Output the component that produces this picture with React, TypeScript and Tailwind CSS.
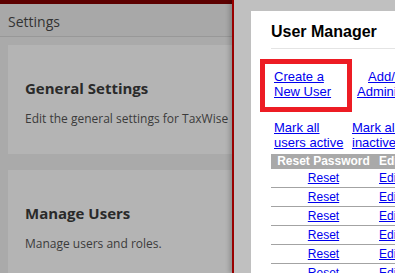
import React from "react";

const os = { fontFamily: '"Open Sans", "Noto Sans", sans-serif' };
const ar = { fontFamily: '"Liberation Sans", Arial, sans-serif' };

function Card({ title, desc, h }: { title: string; desc: string; h: string }) {
  return (
    <div className={`w-[240px] shrink-0 bg-[#b4b4b4] pl-[17px] pt-[33px] ${h}`}>
      <div className="text-[15px] leading-[20px] font-bold text-[#2a2a2a] whitespace-nowrap">{title}</div>
      <div className="mt-[12px] text-[12px] leading-[17px] text-[#3b3b3b] whitespace-nowrap">{desc}</div>
    </div>
  );
}

export default function App() {
  const rows = [0, 1, 2, 3, 4, 5];
  return (
    <div className="w-[395px] h-[273px] overflow-hidden flex bg-[#aaaaaa]">
      <div className="w-[232px] shrink-0 flex flex-col overflow-hidden" style={os}>
        <div className="h-[4px] bg-[#5c0000] shrink-0" />
        <div className="h-[33px] shrink-0 bg-[#a8a8a8] border-b border-[#989898] pl-[8px] pt-[8px] text-[14px] leading-[20px] text-[#333]">
          Settings
        </div>
        <div className="pl-[8px] pt-[8px] flex flex-col gap-[16px]">
          <Card title="General Settings" desc="Edit the general settings for TaxWise" h="h-[109px]" />
          <Card title="Manage Users" desc="Manage users and roles." h="h-[109px]" />
        </div>
      </div>
      <div className="flex-1 flex border-l-2 border-[#990000] bg-[#c0c0c0] pl-[17px] pt-[11px] shadow-[-3px_0_4px_rgba(0,0,0,0.18)] overflow-hidden" style={ar}>
        <div className="flex-1 bg-white pt-[12px] overflow-hidden">
          <div className="pl-[20px] text-[16px] leading-[18px] font-bold text-black whitespace-nowrap">User Manager</div>
          <div className="ml-[20px] mt-[7px] h-px bg-[#e4e4e4]" />
          <div className="mt-[10px] ml-[9px] flex items-start">
            <div className="w-[92px] h-[53px] shrink-0 border-[5px] border-[#ed1c24] pl-[9px] pt-[5px] text-[13px] leading-[15px]">
              <a className="text-[#0000ee] underline block whitespace-nowrap">Create a</a>
              <a className="text-[#0000ee] underline block whitespace-nowrap">New User</a>
            </div>
            <div className="ml-[5px] pt-[10px] text-[13px] leading-[15px] whitespace-nowrap">
              <a className="text-[#0000ee] underline block pl-[11px]">Add/Edit</a>
              <a className="text-[#0000ee] underline block">Administrators</a>
            </div>
          </div>
          <div className="mt-[8px] ml-[23px] flex text-[13px] leading-[15px] whitespace-nowrap">
            <div className="w-[78px] shrink-0">
              <a className="text-[#0000ee] underline block">Mark all</a>
              <a className="text-[#0000ee] underline block">users active</a>
            </div>
            <div>
              <a className="text-[#0000ee] underline block">Mark all</a>
              <a className="text-[#0000ee] underline block">inactive</a>
            </div>
          </div>
          <div className="mt-[4px] ml-[20px] text-[12px] whitespace-nowrap">
            <div className="flex h-[15px] leading-[15px] bg-[#a9a9a9] text-white font-bold">
              <div className="w-[105px] shrink-0 text-center">Reset Password</div>
              <div className="pl-[3px]">Edit</div>
            </div>
            {rows.map((i) => (
              <div key={i} className="flex h-[19px] leading-[18px] border-b border-[#a3a3a3]">
                <div className="w-[105px] shrink-0 text-center">
                  <a className="text-[#0000ee] underline">Reset</a>
                </div>
                <div className="pl-[3px]">
                  <a className="text-[#0000ee] underline">Edit</a>
                </div>
              </div>
            ))}
          </div>
        </div>
      </div>
    </div>
  );
}
